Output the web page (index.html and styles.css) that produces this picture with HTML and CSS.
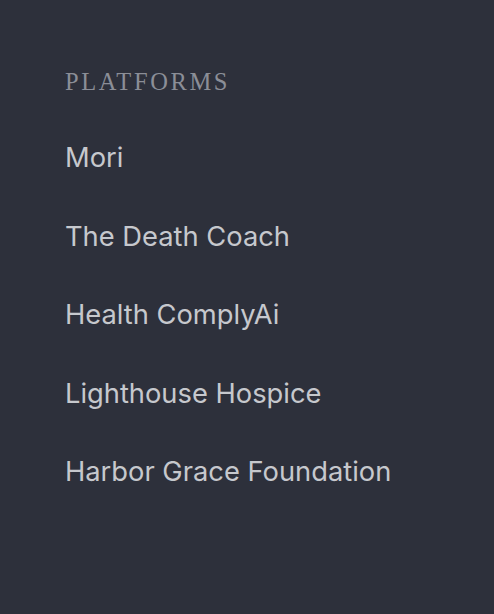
FILE: index.html
```html
<!DOCTYPE html>
<html>
<head>
<meta charset="utf-8">
<link rel="stylesheet" href="styles.css">
</head>
<body>
<nav class="panel">
  <h2 class="heading">Platforms</h2>
  <ul class="list">
    <li>Mori</li>
    <li>The Death Coach</li>
    <li>Health ComplyAi</li>
    <li>Lighthouse Hospice</li>
    <li>Harbor Grace Foundation</li>
  </ul>
</nav>
</body>
</html>
```
FILE: styles.css
```css
html, body {
  margin: 0;
  padding: 0;
  background: #2d303b;
  height: 100%;
}
.panel {
  padding: 67px 0 0 65px;
}
.heading {
  margin: 0;
  font-family: "Liberation Serif", serif;
  font-weight: normal;
  font-size: 24.5px;
  letter-spacing: 2.6px;
  text-transform: uppercase;
  color: #8b8e97;
  line-height: 30px;
}
.list {
  list-style: none;
  margin: 43px 0 0;
  padding: 0;
  display: flex;
  flex-direction: column;
  gap: 42.5px;
}
.list li {
  font-family: Inter, sans-serif;
  font-size: 27.3px;
  line-height: 36px;
  color: #c6c8cd;
}
```
